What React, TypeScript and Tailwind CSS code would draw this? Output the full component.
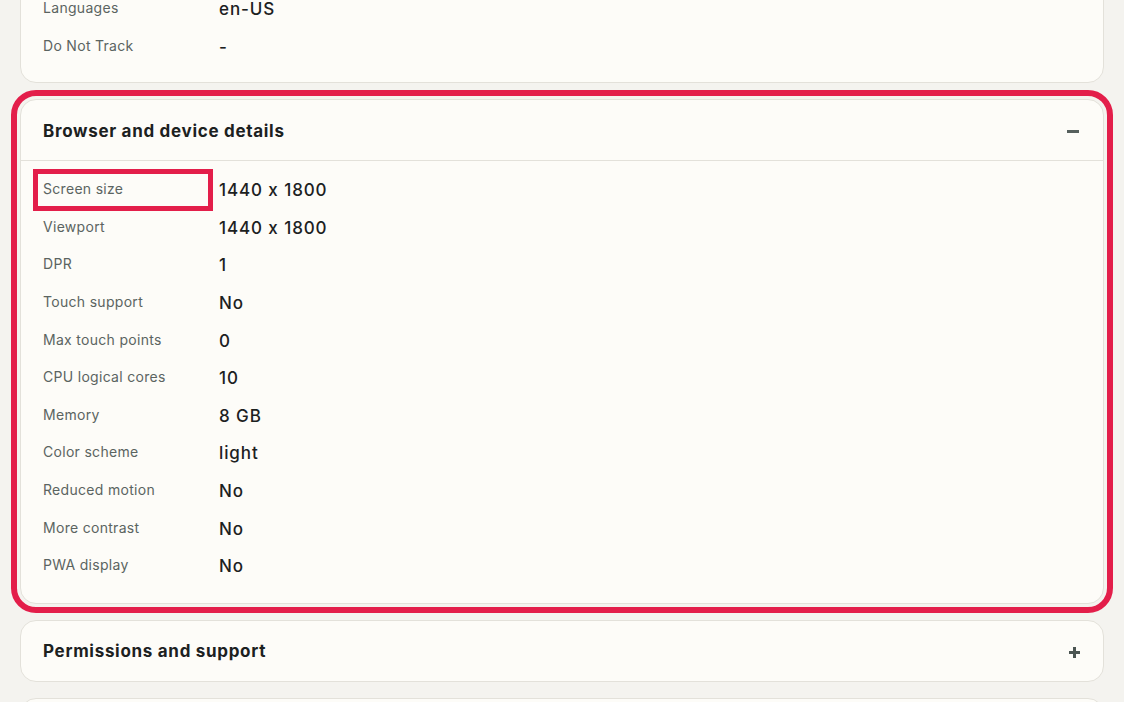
type Row = { label: string; value: string };

const prevRows: Row[] = [
  { label: "Languages", value: "en-US" },
  { label: "Do Not Track", value: "-" },
];

const deviceRows: Row[] = [
  { label: "Screen size", value: "1440 x 1800" },
  { label: "Viewport", value: "1440 x 1800" },
  { label: "DPR", value: "1" },
  { label: "Touch support", value: "No" },
  { label: "Max touch points", value: "0" },
  { label: "CPU logical cores", value: "10" },
  { label: "Memory", value: "8 GB" },
  { label: "Color scheme", value: "light" },
  { label: "Reduced motion", value: "No" },
  { label: "More contrast", value: "No" },
  { label: "PWA display", value: "No" },
];

function DetailRow({ row, marked }: { row: Row; marked?: boolean }) {
  return (
    <div className="relative flex h-[37.6px] items-start pt-[8px]">
      {marked && (
        <span className="pointer-events-none absolute -left-[10px] -top-[2px] h-[42px] w-[180px] border-[5px] border-[#e31e4a]" />
      )}
      <dt className="w-[176px] shrink-0 text-[14px] leading-[19px] tracking-[0.3px] text-[#5b6461]">
        {row.label}
      </dt>
      <dd className="text-[17px] font-medium leading-[22px] tracking-[0.9px] text-[#1c211f]">
        {row.value}
      </dd>
    </div>
  );
}

export default function App() {
  return (
    <div className="h-[702px] overflow-hidden bg-[#f4f3ef] px-5 font-['Inter','Noto_Sans',sans-serif] [font-feature-settings:'calt'_0]">
      {/* Previous section, scrolled mostly out of view */}
      <section className="-mt-[40px] rounded-2xl border border-[#e3e1da] bg-[#fdfcf8] px-[22px] pb-[17px] pt-[29px]">
        <dl>
          {prevRows.map((row) => (
            <DetailRow key={row.label} row={row} />
          ))}
        </dl>
      </section>

      {/* Browser and device details (expanded, highlighted) */}
      <section className="mt-4 rounded-2xl border border-[#e3e1da] bg-[#fdfcf8] outline-[6px] outline-offset-[3px] outline-solid outline-[#e31e4a]">
        <header className="flex h-[61px] items-center justify-between border-b border-[#e3e1da] px-[22px] pt-[3px]">
          <h2 className="text-[17px] font-bold tracking-[0.7px] text-[#1c211f]">
            Browser and device details
          </h2>
          <span className="mr-[2px] h-[3px] w-[12px] bg-[#56605d]" />
        </header>
        <dl className="px-[22px] pb-[18px] pt-[10px]">
          {deviceRows.map((row, i) => (
            <DetailRow key={row.label} row={row} marked={i === 0} />
          ))}
        </dl>
      </section>

      {/* Permissions and support (collapsed) */}
      <section className="mt-4 rounded-2xl border border-[#e3e1da] bg-[#fdfcf8]">
        <header className="flex h-[60px] items-center justify-between px-[22px] pt-[3px]">
          <h2 className="text-[17px] font-bold tracking-[0.7px] text-[#1c211f]">
            Permissions and support
          </h2>
          <span className="relative mr-[1px] h-[11px] w-[11px]">
            <span className="absolute left-0 top-[4px] h-[3px] w-[11px] bg-[#4b5552]" />
            <span className="absolute left-[4px] top-0 h-[11px] w-[3px] bg-[#4b5552]" />
          </span>
        </header>
      </section>

      <section className="mt-4 h-[62px] rounded-2xl border border-[#e3e1da] bg-[#fdfcf8]" />
    </div>
  );
}
